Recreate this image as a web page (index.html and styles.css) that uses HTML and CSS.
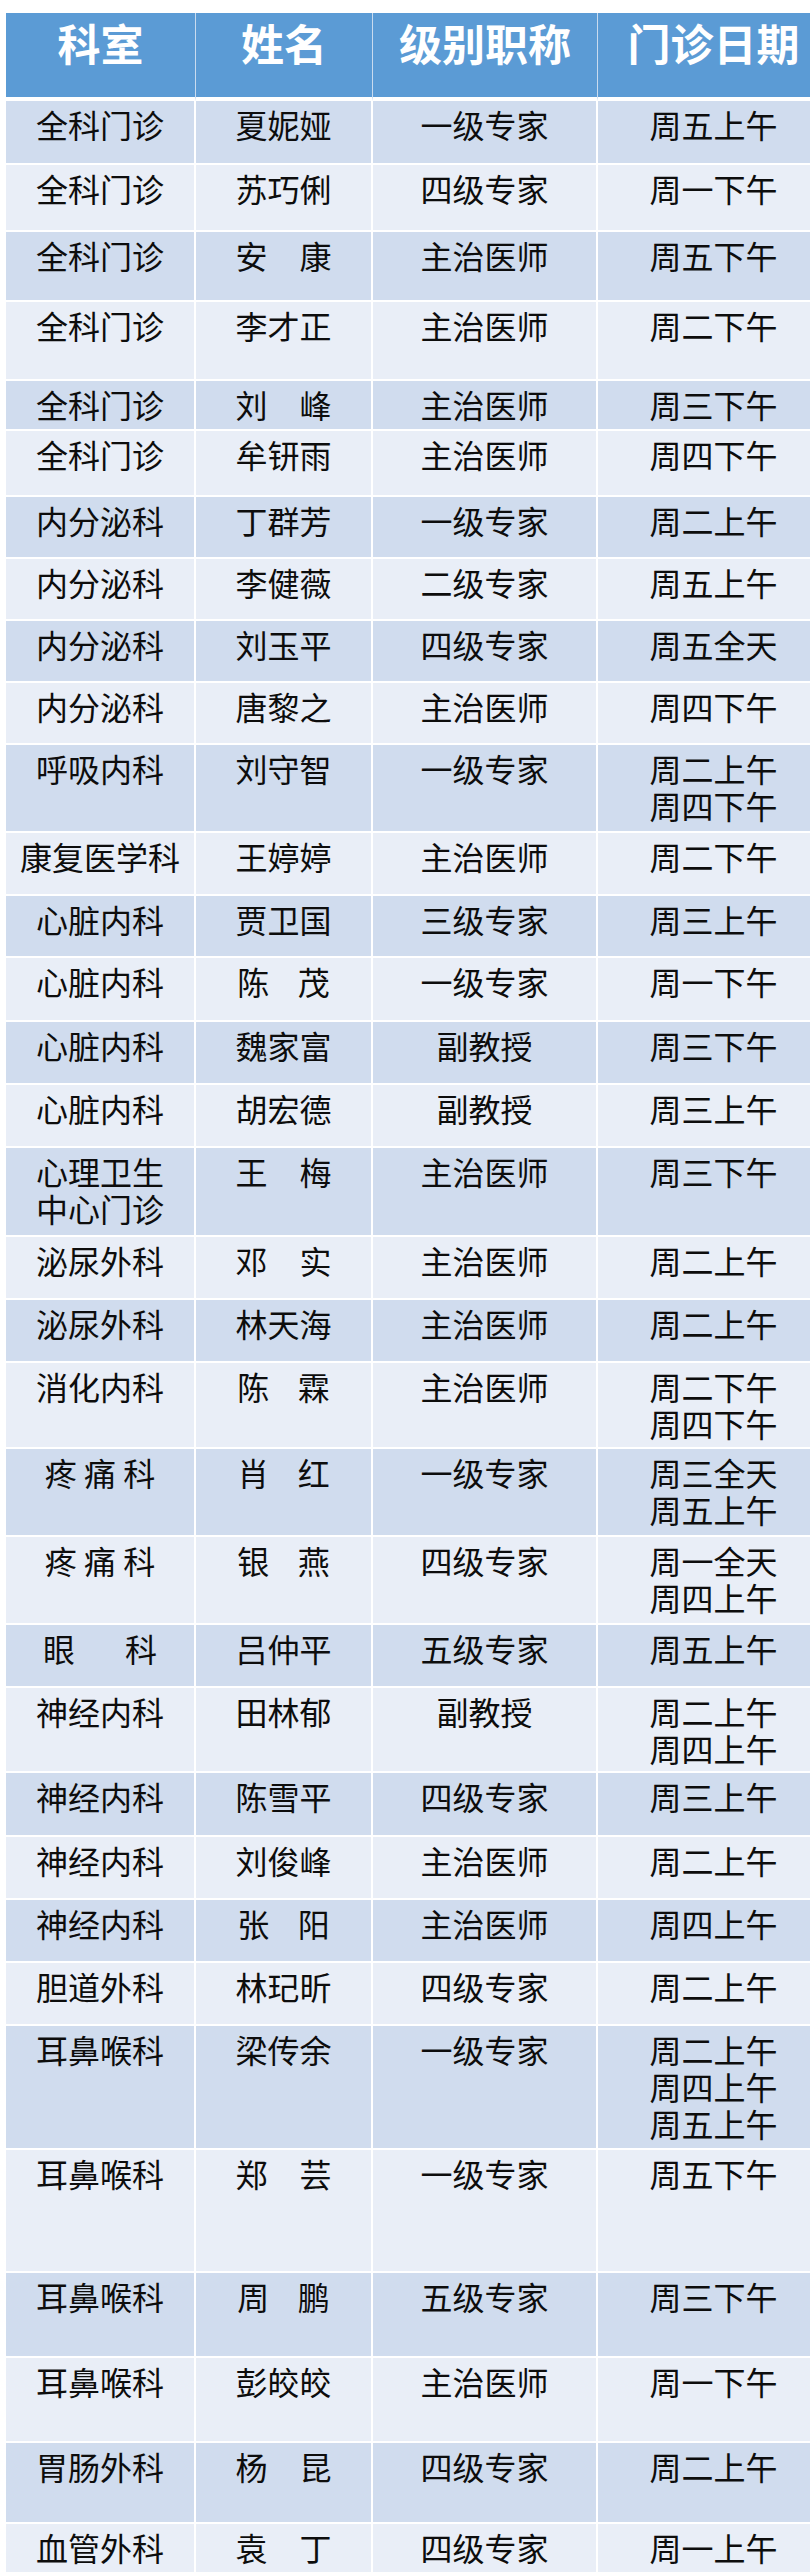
FILE: index.html
```html
<!DOCTYPE html>
<html lang="zh-CN">
<head>
<meta charset="utf-8">
<title>门诊专家排班表</title>
<link rel="stylesheet" href="styles.css">
</head>
<body>
<div class="sheet">
<table class="roster">
<colgroup>
<col class="c-dept"><col class="c-name"><col class="c-title"><col class="c-date">
</colgroup>
<thead>
<tr class="head"><th>科室</th><th>姓名</th><th>级别职称</th><th>门诊日期</th></tr>
</thead>
<tbody>
<tr class="h64"><td>全科门诊</td><td>夏妮娅</td><td>一级专家</td><td>周五上午</td></tr>
<tr class="h67"><td>全科门诊</td><td>苏巧俐</td><td>四级专家</td><td>周一下午</td></tr>
<tr class="h70"><td>全科门诊</td><td>安　康</td><td>主治医师</td><td>周五下午</td></tr>
<tr class="h79"><td>全科门诊</td><td>李才正</td><td>主治医师</td><td>周二下午</td></tr>
<tr class="h50"><td>全科门诊</td><td>刘　峰</td><td>主治医师</td><td>周三下午</td></tr>
<tr class="h66"><td>全科门诊</td><td>牟钘雨</td><td>主治医师</td><td>周四下午</td></tr>
<tr class="h62"><td>内分泌科</td><td>丁群芳</td><td>一级专家</td><td>周二上午</td></tr>
<tr class="h62"><td>内分泌科</td><td>李健薇</td><td>二级专家</td><td>周五上午</td></tr>
<tr class="h62"><td>内分泌科</td><td>刘玉平</td><td>四级专家</td><td>周五全天</td></tr>
<tr class="h62"><td>内分泌科</td><td>唐黎之</td><td>主治医师</td><td>周四下午</td></tr>
<tr class="h88"><td>呼吸内科</td><td>刘守智</td><td>一级专家</td><td>周二上午<br>周四下午</td></tr>
<tr class="h63"><td>康复医学科</td><td>王婷婷</td><td>主治医师</td><td>周二下午</td></tr>
<tr class="h62"><td>心脏内科</td><td>贾卫国</td><td>三级专家</td><td>周三上午</td></tr>
<tr class="h64"><td>心脏内科</td><td>陈&nbsp;&nbsp;&nbsp;&nbsp;茂</td><td>一级专家</td><td>周一下午</td></tr>
<tr class="h63"><td>心脏内科</td><td>魏家富</td><td>副教授</td><td>周三下午</td></tr>
<tr class="h63"><td>心脏内科</td><td>胡宏德</td><td>副教授</td><td>周三上午</td></tr>
<tr class="h89"><td>心理卫生<br>中心门诊</td><td>王　梅</td><td>主治医师</td><td>周三下午</td></tr>
<tr class="h63"><td>泌尿外科</td><td>邓　实</td><td>主治医师</td><td>周二上午</td></tr>
<tr class="h63"><td>泌尿外科</td><td>林天海</td><td>主治医师</td><td>周二上午</td></tr>
<tr class="h86"><td>消化内科</td><td>陈&nbsp;&nbsp;&nbsp;&nbsp;霖</td><td>主治医师</td><td>周二下午<br>周四下午</td></tr>
<tr class="h88"><td>疼 痛 科</td><td>肖&nbsp;&nbsp;&nbsp;&nbsp;红</td><td>一级专家</td><td>周三全天<br>周五上午</td></tr>
<tr class="h88"><td>疼 痛 科</td><td>银&nbsp;&nbsp;&nbsp;&nbsp;燕</td><td>四级专家</td><td>周一全天<br>周四上午</td></tr>
<tr class="h63"><td>眼&nbsp;&nbsp;&nbsp;&nbsp;&nbsp;&nbsp;&nbsp;科</td><td>吕仲平</td><td>五级专家</td><td>周五上午</td></tr>
<tr class="h85"><td>神经内科</td><td>田林郁</td><td>副教授</td><td>周二上午<br>周四上午</td></tr>
<tr class="h64"><td>神经内科</td><td>陈雪平</td><td>四级专家</td><td>周三上午</td></tr>
<tr class="h63"><td>神经内科</td><td>刘俊峰</td><td>主治医师</td><td>周二上午</td></tr>
<tr class="h63"><td>神经内科</td><td>张&nbsp;&nbsp;&nbsp;&nbsp;阳</td><td>主治医师</td><td>周四上午</td></tr>
<tr class="h63"><td>胆道外科</td><td>林玘昕</td><td>四级专家</td><td>周二上午</td></tr>
<tr class="h124"><td>耳鼻喉科</td><td>梁传余</td><td>一级专家</td><td>周二上午<br>周四上午<br>周五上午</td></tr>
<tr class="h123"><td>耳鼻喉科</td><td>郑　芸</td><td>一级专家</td><td>周五下午</td></tr>
<tr class="h85"><td>耳鼻喉科</td><td>周&nbsp;&nbsp;&nbsp;&nbsp;鹏</td><td>五级专家</td><td>周三下午</td></tr>
<tr class="h85"><td>耳鼻喉科</td><td>彭皎皎</td><td>主治医师</td><td>周一下午</td></tr>
<tr class="h81"><td>胃肠外科</td><td>杨　昆</td><td>四级专家</td><td>周二上午</td></tr>
<tr class="h62"><td>血管外科</td><td>袁　丁</td><td>四级专家</td><td>周一上午</td></tr>
</tbody>
</table>
</div>
</body>
</html>
```

FILE: styles.css
```css
html, body {
  margin: 0;
  padding: 0;
  background: #ffffff;
}

.sheet {
  width: 810px;
  height: 2572px;
  overflow: hidden;
  box-sizing: border-box;
  padding: 13px 0 0 6px;
  background: #ffffff;
}

.roster {
  table-layout: fixed;
  width: 823px;
  border-collapse: separate;
  border-spacing: 0;
  font-family: "Noto Sans CJK SC", "Microsoft YaHei", sans-serif;
  color: #0d0d0d;
}

.c-dept { width: 190px; }
.c-name { width: 177px; }
.c-title { width: 225px; }
.c-date { width: 231px; }

.roster th,
.roster td {
  box-sizing: border-box;
  vertical-align: top;
  text-align: center;
  padding: 0;
  border-right: 2px solid #ffffff;
  border-bottom: 2px solid #ffffff;
  white-space: nowrap;
}

.roster th:last-child,
.roster td:last-child {
  border-right: none;
}

.head {
  height: 88px;
}

.roster th {
  background: #5b9bd5;
  color: #ffffff;
  font-size: 43px;
  font-weight: 700;
  line-height: 50px;
  padding-top: 4px;
  border-bottom: 4px solid #ffffff;
  border-right-color: #c9dbef;
  border-right-width: 1px;
}

.roster td {
  font-size: 32px;
  line-height: 37px;
  padding-top: 5px;
}

.roster tbody tr:nth-child(odd) td {
  background: #d0dcee;
}

.roster tbody tr:nth-child(even) td {
  background: #e9eef7;
}

.h50 { height: 50px; }
.h62 { height: 62px; }
.h63 { height: 63px; }
.h64 { height: 64px; }
.h66 { height: 66px; }
.h67 { height: 67px; }
.h70 { height: 70px; }
.h79 { height: 79px; }
.h81 { height: 81px; }
.h85 { height: 85px; }
.h86 { height: 86px; }
.h88 { height: 88px; }
.h89 { height: 89px; }
.h123 { height: 123px; }
.h124 { height: 124px; }
```
